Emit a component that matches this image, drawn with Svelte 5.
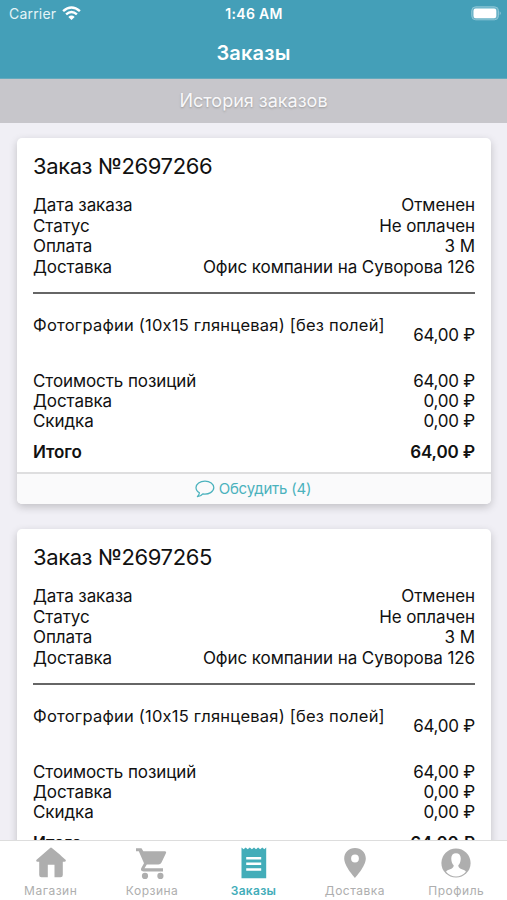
<script>
  const orders = [{ number: '2697266' }, { number: '2697265' }];
  const details = [
    ['Дата заказа', 'Отменен'],
    ['Статус', 'Не оплачен'],
    ['Оплата', '3 М'],
    ['Доставка', 'Офис компании на Суворова 126']
  ];
  const costs = [
    ['Стоимость позиций', '64,00 ₽'],
    ['Доставка', '0,00 ₽'],
    ['Скидка', '0,00 ₽']
  ];
  const tabs = [
    { id: 'shop', label: 'Магазин' },
    { id: 'cart', label: 'Корзина' },
    { id: 'orders', label: 'Заказы' },
    { id: 'delivery', label: 'Доставка' },
    { id: 'profile', label: 'Профиль' }
  ];
</script>

<div class="screen">
  <header>
    <div class="status">
      <div class="carrier">
        <span>Carrier</span>
        <svg width="19" height="14" viewBox="0 0 19 14" fill="none" stroke="#fff" stroke-width="2.5">
          <path d="M1.1 5.1Q9.5-2.2 17.9 5.1" />
          <path d="M4.1 8.4Q9.5 3.7 14.9 8.4" />
          <path d="M6.3 10.9Q9.5 8.2 12.7 10.9L9.5 14Z" fill="#fff" stroke="none" />
        </svg>
      </div>
      <div class="time">1:46 AM</div>
      <div class="power">
        <svg width="31" height="15" viewBox="0 0 31 15">
          <rect x=".7" y=".8" width="26.8" height="13" rx="4" fill="#69b3c8" stroke="#8cc5d5" />
          <rect x="2.5" y="2.6" width="22.8" height="9.6" rx="2.2" fill="#fff" />
          <path d="M28.7 5.3Q31 7.3 28.7 9.3Z" fill="#8cc5d5" />
        </svg>
      </div>
    </div>
    <h1>Заказы</h1>
  </header>
  <div class="history">История заказов</div>

  <main>
    {#each orders as order}
      <article>
        <div class="content">
          <h2>Заказ №{order.number}</h2>
          <div class="details">
            {#each details as [name, value]}
              <div class="row"><span>{name}</span><span>{value}</span></div>
            {/each}
          </div>
          <div class="product">
            <span>Фотографии (10x15 глянцевая) [без полей]</span>
            <span class="price">64,00 ₽</span>
          </div>
          <div class="costs">
            {#each costs as [name, value]}
              <div class="row"><span>{name}</span><span class="amount">{value}</span></div>
            {/each}
          </div>
          <div class="row total"><span>Итого</span><span class="amount">64,00 ₽</span></div>
        </div>
        <footer>
          <svg width="20" height="18" viewBox="0 0 20 18" fill="none" stroke="#4bb2bd" stroke-width="1.25" stroke-linejoin="round">
            <path d="M10 1.1C5 1.1 1 3.9 1 7.6c0 2.2 1.3 4.1 3.4 5.2-.1 1.5-.8 2.8-2 3.9 2.1-.1 4-.9 5.4-2.8 6.2.8 11-2.2 11-6.3 0-3.7-3.9-6.5-8.8-6.5Z" />
          </svg>
          <span>Обсудить (4)</span>
        </footer>
      </article>
    {/each}
  </main>

  <nav>
    {#each tabs as tab}
      <div class="tab" class:active={tab.id === 'orders'}>
        <svg width="32" height="32" viewBox="0 0 32 32" fill="currentColor">
          {#if tab.id === 'shop'}
            <path d="M16.9.9 24.8 7.6 26.8 9.4 30.8 13.1Q31.3 14.8 29.5 14.8H27.8V28Q27.8 30.3 25.5 30.3H19.5V17.8H12.8V30.3H6.5Q4.2 30.3 4.2 28V14.8H2.4Q.6 14.8 1.3 13.1L15.1.9Q16 .2 16.9.9Z" />
          {:else if tab.id === 'cart'}
            <path d="M0 1.2H5.5L7.3 4.3H28.7Q30.9 4.3 29.8 6.4L25.5 15.6Q24.5 17.5 22.4 17.5H10.8L8.5 21.3H27V24.4H7.5Q3.6 23.7 5.6 20.4L8 16.3 2.8 4.2H0Z" />
            <circle cx="9" cy="28.9" r="3.1" /><circle cx="24.4" cy="28.9" r="3.1" />
          {:else if tab.id === 'orders'}
            <path d="M3.5.6 5.6 2.2 7.7.6 9.7 2.2 11.8.6 13.9 2.2 16 .6 18 2.2 20.1.6 22.2 2.2 24.3.6 26.3 2.2 28.2.6V31.3H3.5Z" />
            <path d="M8.2 11.3H23.2M8.2 16.8H23.2M8.2 22.5H23.2" stroke="#fff" stroke-width="2.5" />
          {:else if tab.id === 'delivery'}
            <path fill-rule="evenodd" d="M16 1C9.8 1 5.2 5.5 5.2 11.5 5.2 19.2 16 31 16 31S26.8 19.2 26.8 11.5C26.8 5.5 22.2 1 16 1ZM16 7.6a3.9 3.9 0 1 1 0 7.8 3.9 3.9 0 0 1 0-7.8Z" />
          {:else}
            <circle cx="16" cy="16" r="14.6" />
            <path fill="#fff" d="M16 6.3c-3.1 0-5 2.3-4.7 5.7.1 2.8 1 5 2.4 6.3-.1 1.7-.7 2.8-2.3 3.4-2.7.9-4.5 1.6-5.4 3.1a13.2 13.2 0 0 0 20 0c-.9-1.5-2.7-2.2-5.4-3.1-1.6-.6-2.2-1.7-2.3-3.4 1.4-1.3 2.3-3.5 2.4-6.3.3-3.4-1.6-5.7-4.7-5.7Z" />
          {/if}
        </svg>
        <span>{tab.label}</span>
      </div>
    {/each}
  </nav>
</div>

<style>
  .screen {
    width: 507px;
    height: 900px;
    display: flex;
    flex-direction: column;
    overflow: hidden;
    background: #f0eff5;
    color: #111;
    font-family: Inter, "Liberation Sans", sans-serif;
    font-size: 17px;
  }
  header {
    flex: 0 0 79px;
    min-height: 0;
    box-sizing: border-box;
    background: #449fb8;
    color: #fff;
    border-bottom: 1px solid #65aabd;
  }
  .status {
    display: grid;
    grid-template-columns: 1fr auto 1fr;
    align-items: center;
    height: 27px;
    padding: 0 5px 0 9px;
    font-size: 14px;
  }
  .carrier { display: flex; align-items: center; gap: 6px; color: #e5f4f7; letter-spacing: .2px; }
  .carrier svg { margin-top: -1px; }
  .time { font-weight: 600; letter-spacing: .35px; margin-right: 3px; }
  .power { display: flex; justify-content: flex-end; margin-top: -1px; }
  h1 { margin: 0; height: 51px; text-align: center; font-size: 20px; line-height: 52px; font-weight: 600; letter-spacing: .2px; }
  .history {
    flex: 0 0 44px;
    height: 44px;
    min-height: 0;
    background: #c7c6cb;
    color: #f8f8fa;
    text-align: center;
    font-size: 18px;
    line-height: 44px;
    text-shadow: 0 1px 2px #999;
  }
  main {
    flex: 1;
    min-height: 0;
    overflow: hidden;
    padding: 15px 16px 0 17px;
    display: flex;
    flex-direction: column;
    gap: 25px;
  }
  article {
    flex: 0 0 366px;
    display: flex;
    flex-direction: column;
    border-radius: 5px;
    background: #fff;
    box-shadow: 0 3px 8px rgba(0, 0, 0, .2);
  }
  .content { flex: 1; padding: 0 16px; }
  h2 { margin: 0; padding-top: 12px; font-size: 22px; line-height: 32px; font-weight: 400; letter-spacing: -.4px; }
  .details { height: 97px; padding-top: 13px; border-bottom: 2px solid #666; }
  .row { display: flex; justify-content: space-between; line-height: 20.7px; white-space: nowrap; letter-spacing: -.08px; }
  .product {
    display: flex;
    justify-content: space-between;
    height: 76.5px;
    box-sizing: border-box;
    padding-top: 20px;
    line-height: 22px;
    white-space: nowrap;
    font-size: 16.5px;
    letter-spacing: .22px;
  }
  .price { padding-top: 10px; font-size: 17px; letter-spacing: -.25px; }
  .amount { letter-spacing: -.25px; }
  .costs .row { line-height: 20.4px; }
  .total { margin-top: 10px; font-weight: 600; }
  .total .amount { letter-spacing: -.12px; }
  footer {
    flex: 0 0 32px;
    box-sizing: border-box;
    border-top: 2px solid #dededf;
    border-radius: 0 0 5px 5px;
    background: #fafafb;
    color: #4bb2bd;
    display: flex;
    align-items: center;
    justify-content: center;
    gap: 4px;
    font-size: 15px;
    letter-spacing: -.2px;
    padding: 0 2px 1px 0;
  }
  nav {
    flex: 0 0 60px;
    box-sizing: border-box;
    border-top: 1px solid #ddd;
    background: #fff;
    display: flex;
    position: relative;
  }
  .tab {
    flex: 1;
    display: flex;
    flex-direction: column;
    align-items: center;
    padding-top: 6px;
    color: #aeaeae;
    font-size: 12px;
    line-height: 14px;
    letter-spacing: .5px;
  }
  .tab span { margin-top: 5px; }
  .active { color: #43adb9; font-weight: 600; letter-spacing: .3px; }
</style>
